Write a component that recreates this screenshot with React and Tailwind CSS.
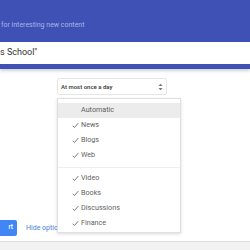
import React from 'react';

const sources = ['News', 'Blogs', 'Web'];
const more = ['Video', 'Books', 'Discussions', 'Finance'];

const Check = () => (
  <svg width="8" height="7" viewBox="0 0 8 7" className="mr-[2px]">
    <path d="M0.8 3.8 L2.8 5.8 L7.2 0.8" fill="none" stroke="#666" strokeWidth="1" />
  </svg>
);

const Item = ({ label }) => (
  <div className="h-[15px] flex items-center pl-[14px] text-[7.2px] text-[#5f5f5f]">
    <span className="w-[9px] flex items-center">
      <Check />
    </span>
    {label}
  </div>
);

const App = () => {
  return (
    <div className="relative w-[250px] h-[250px] overflow-hidden bg-white font-['Roboto',sans-serif]">
      {/* header */}
      <div className="h-[69px] bg-[#3f51b5] pt-[20px] shadow-[0_2px_3px_rgba(0,0,0,0.18)]">
        <p className="pl-[1px] text-[7px] leading-[10px] text-[#aab3e6]">for interesting new content</p>
        <div className="mt-[12px] h-[22px] bg-white flex items-center overflow-hidden">
          <span className="text-[9px] text-[#333]">s School"</span>
        </div>
      </div>

      {/* frequency select */}
      <div className="mt-[9px] ml-[57px] w-[110px] h-[17px] border border-[#e6e6e6] rounded-[2px] flex items-center justify-between px-[3px]">
        <span className="text-[6px] font-semibold text-[#444]">At most once a day</span>
        <svg width="5" height="8" viewBox="0 0 5 8">
          <path d="M0.5 3 L2.5 0.8 L4.5 3 Z" fill="#777" />
          <path d="M0.5 5 L2.5 7.2 L4.5 5 Z" fill="#777" />
        </svg>
      </div>

      {/* action row */}
      <div className="mt-[125px] flex items-center h-[16px]">
        <div className="w-[17px] h-[16px] bg-[#4285f4] rounded-r-[2px] flex items-center justify-end pr-[4px] text-[6.5px] font-medium text-white">
          rt
        </div>
        <span className="ml-[9px] text-[7px] text-[#4a7fd6]">Hide options</span>
      </div>

      {/* footer strip */}
      <div className="absolute left-0 right-0 bottom-0 h-[9px] border-t border-[#dcdcdc] bg-[#f2f2f2]" />

      {/* dropdown menu */}
      <div className="absolute left-[57px] top-[98px] w-[124px] h-[135px] bg-white border border-[#e0e0e0] shadow-[0_1px_3px_rgba(0,0,0,0.15)] pt-[4px]">
        <div className="h-[15px] flex items-center pl-[23px] bg-[#ececec] text-[7.2px] text-[#5f5f5f]">Automatic</div>
        {sources.map((s) => (
          <Item key={s} label={s} />
        ))}
        <div className="h-[8px] flex items-center">
          <div className="w-full h-px bg-[#efefef]" />
        </div>
        {more.map((s) => (
          <Item key={s} label={s} />
        ))}
      </div>
    </div>
  );
};

export default App;
